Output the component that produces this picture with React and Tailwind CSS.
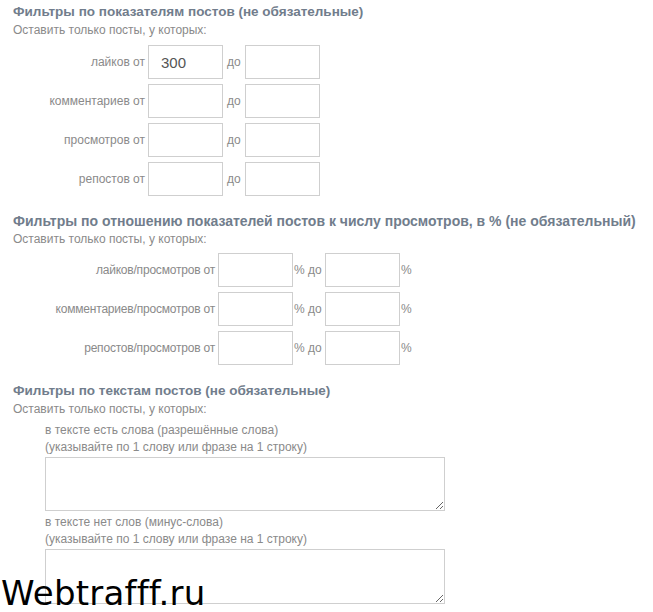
import React from "react";

const countRows = [
  { label: "лайков от", from: "300" },
  { label: "комментариев от", from: "" },
  { label: "просмотров от", from: "" },
  { label: "репостов от", from: "" },
];

const ratioRows = ["лайков/просмотров от", "комментариев/просмотров от", "репостов/просмотров от"];

function Box({ value }) {
  return (
    <input
      defaultValue={value}
      className="w-[75px] h-[34px] border border-[#cfcfcf] bg-white px-[12px] text-[15px] text-[#555] outline-none"
    />
  );
}

function Heading({ children, size = "text-[13.5px]" }) {
  return (
    <div className="pl-[13px]">
      <div className={size + " leading-[16px] font-bold text-[#717d8c] whitespace-nowrap"}>{children}</div>
      <div className="text-[12px] leading-[16px] mt-[2px] text-[#8a8a8a]">Оставить только посты, у которых:</div>
    </div>
  );
}

export default function App() {
  return (
    <div className="relative w-[653px] h-[612px] overflow-hidden bg-white font-['Liberation_Sans',Arial,sans-serif]">
      <div className="pt-[4px]">
        <Heading>Фильтры по показателям постов (не обязательные)</Heading>
        <div className="mt-[7px] flex flex-col gap-[5px]">
          {countRows.map((r) => (
            <div key={r.label} className="flex items-center h-[34px]">
              <div className="w-[145px] text-right text-[12px] text-[#8a8a8a]">{r.label}</div>
              <div className="ml-[3px]"><Box value={r.from} /></div>
              <div className="w-[22px] pl-[4px] text-[12px] text-[#8a8a8a]">до</div>
              <Box value="" />
            </div>
          ))}
        </div>
      </div>

      <div className="mt-[17px]">
        <Heading size="text-[14px]">Фильтры по отношению показателей постов к числу просмотров, в % (не обязательный)</Heading>
        <div className="mt-[6px] flex flex-col gap-[5px]">
          {ratioRows.map((label) => (
            <div key={label} className="flex items-center h-[34px]">
              <div className="w-[215px] text-right text-[12px] text-[#8a8a8a] tracking-[-0.2px]">{label}</div>
              <div className="ml-[3px]"><Box value="" /></div>
              <div className="w-[32px] pl-[1px] text-[12px] text-[#8a8a8a]">% до</div>
              <Box value="" />
              <div className="pl-[1px] text-[12px] text-[#8a8a8a]">%</div>
            </div>
          ))}
        </div>
      </div>

      <div className="mt-[18px]">
        <Heading>Фильтры по текстам постов (не обязательные)</Heading>
        <div className="pl-[45px] mt-[5px] text-[12px] leading-[16.5px] text-[#8a8a8a]">
          <div>в тексте есть слова (разрешённые слова)</div>
          <div>(указывайте по 1 слову или фразе на 1 строку)</div>
          <textarea className="block mt-[2px] w-[400px] h-[54px] border border-[#cfcfcf] bg-white outline-none" />
          <div className="mt-[3px]">в тексте нет слов (минус-слова)</div>
          <div>(указывайте по 1 слову или фразе на 1 строку)</div>
          <textarea className="block mt-[2px] w-[400px] h-[55px] border border-[#cfcfcf] bg-white outline-none" />
        </div>
      </div>

      <div className="absolute left-[1px] top-[576px] text-[34px] leading-[34px] text-black font-['DejaVu_Sans',sans-serif] tracking-[0.2px]">
        Webtrafff.ru
      </div>
    </div>
  );
}
